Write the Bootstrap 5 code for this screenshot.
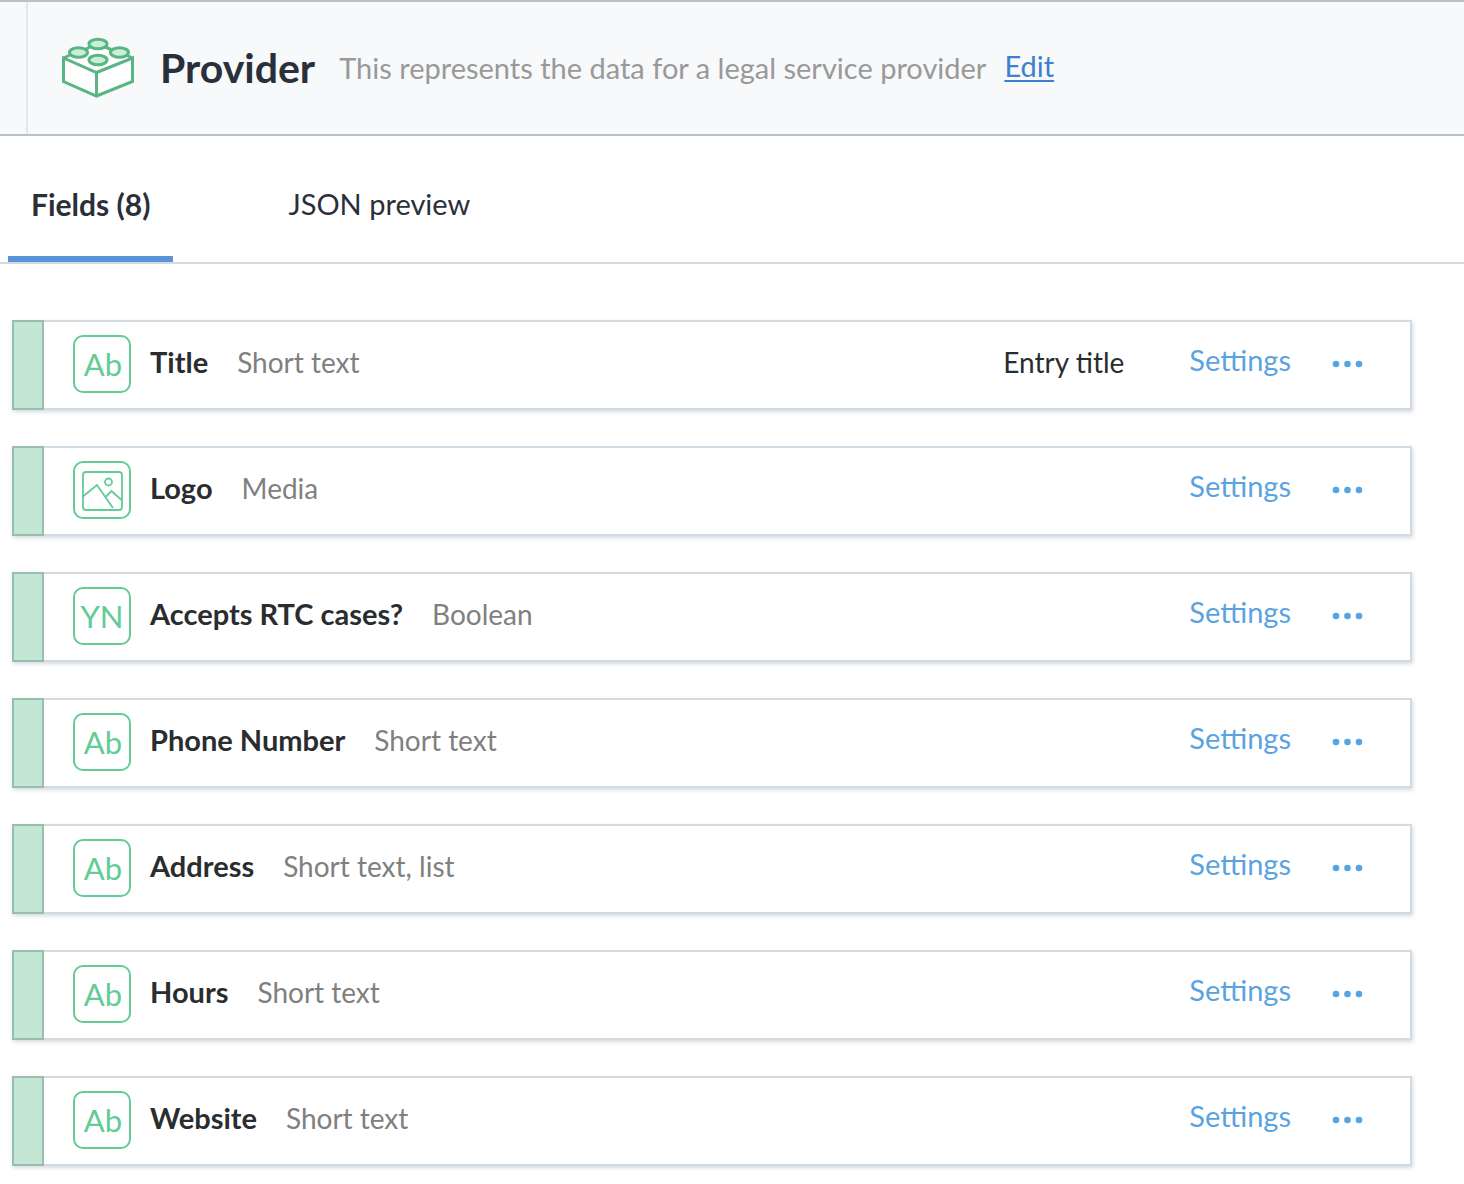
<!DOCTYPE html>
<html lang="en">
<head>
<meta charset="utf-8">
<meta name="viewport" content="width=device-width, initial-scale=1">
<title>Provider</title>
<link href="https://cdn.jsdelivr.net/npm/bootstrap@5.3.0/dist/css/bootstrap.min.css" rel="stylesheet">
<style>
  body { font-family: Lato, "Liberation Sans", sans-serif; font-size: 29px; line-height: 36px; color: #2a3039; }
  .type-header { height: 136px; background: #f7f9fb; border-top: 2px solid #b7c3c9; border-bottom: 2px solid #b7c3c9; }
  .back-strip { width: 28px; border-right: 2px solid #e3e7ea; }
  .brick { width: 74px; height: 62px; margin: 0 25px 2px 33px; }
  .type-name { font-size: 41px; line-height: 48px; font-weight: 700; margin-right: 24px; }
  .type-note { color: #999; margin-right: 18px; }
  .edit-link { color: #3c80cf; padding-bottom: 4px; text-underline-offset: 3px; }
  .type-tabs { height: 128px; border-bottom: 2px solid #d3dbe2; padding-left: 8px; gap: 92px; }
  .type-tabs .nav-link { color: #2a3039; border-radius: 0; padding: 16px 23px 0; border-bottom: 6px solid transparent; }
  .type-tabs .nav-link.active { font-size: 30px; font-weight: 700; border-bottom-color: #5b92dc; }
  .field-list { margin: 56px 52px 18px 12px; gap: 36px; }
  .field-row { height: 90px; border: 2px solid #d3dbe2; border-left: 0; background: #fff; box-shadow: 1px 2px 4px rgba(90, 110, 140, .25); }
  .drag-bar { width: 32px; margin: -2px 0; background: #c4e7d5; border: 2px solid #97bfac; }
  .field-icon { width: 58px; height: 58px; margin: 0 19px 2px 29px; }
  .field-icon text { font-size: 31px; fill: #63cb94; text-anchor: middle; }
  .field-name { font-weight: 700; color: #2a2d30; margin-right: 29px; }
  .field-kind { font-size: 28px; color: #808080; }
  .lift { padding-bottom: 6px; }
  .entry-tag { font-size: 28px; color: #2a2d30; margin-right: 65px; }
  .act { color: #5ba3e0; border: 0; background: none; padding: 0; }
  .set-act { padding-bottom: 10px; margin-right: 41px; }
  .dots-act { width: 32px; margin-right: 46px; padding-bottom: 2px; line-height: 0; }
</style>
<script src="https://cdn.jsdelivr.net/npm/bootstrap@5.3.0/dist/js/bootstrap.bundle.min.js"></script>
</head>
<body>
<svg class="d-none" aria-hidden="true">
  <symbol id="i-frame" viewBox="0 0 58 58"><rect x="1" y="1" width="56" height="56" rx="9" fill="none" stroke="#63cb94" stroke-width="2"/></symbol>
  <symbol id="i-dots" viewBox="0 0 32 8"><g fill="#55a5e5"><circle cx="4" cy="4" r="3.3"/><circle cx="15.500" cy="4" r="3.3"/><circle cx="27" cy="4" r="3.3"/></g></symbol>
</svg>

<header class="type-header d-flex">
  <div class="back-strip flex-shrink-0"></div>
  <div class="d-flex align-items-center text-nowrap">
    <svg class="brick" viewBox="0 0 74 62" fill="none" stroke="#59b583" stroke-width="3" aria-hidden="true">
      <path d="M2.500 22 35.500 8 71.500 22V46L35.500 60 2.500 46Z" fill="#fff" stroke="none"/>
      <path d="M2.500 22V45.500L35.500 60 71.500 45.500V22L35.500 36.500ZM35.500 36.500V60M2.500 22 9 19M25 13 30 10.500M43 10.500 50 13.500M65 19 71.500 22"/>
      <g fill="#c9efd8"><ellipse cx="37" cy="8" rx="9" ry="4.700"/><ellipse cx="17.500" cy="16.500" rx="9" ry="4.700"/><ellipse cx="58.500" cy="16.500" rx="9" ry="4.700"/><ellipse cx="37" cy="24" rx="9" ry="4.700"/></g>
    </svg>
    <h1 class="type-name mb-0">Provider</h1>
    <span class="type-note">This represents the data for a legal service provider</span>
    <a class="edit-link" href="#">Edit</a>
  </div>
</header>

<nav class="type-tabs nav flex-nowrap align-items-stretch">
  <a class="nav-link active d-flex align-items-center" aria-current="page" href="#">Fields (8)</a>
  <a class="nav-link d-flex align-items-center" href="#">JSON preview</a>
</nav>

<main class="field-list d-flex flex-column text-nowrap">
  <div class="field-row d-flex align-items-center">
    <div class="drag-bar align-self-stretch"></div>
    <svg class="field-icon" viewBox="0 0 58 58"><use href="#i-frame"/><text x="30" y="41">Ab</text></svg>
    <span class="field-name lift">Title</span><span class="field-kind lift">Short text</span>
    <span class="entry-tag lift ms-auto">Entry title</span>
    <button type="button" class="act set-act">Settings</button>
    <button type="button" class="act dots-act" aria-label="More"><svg width="32" height="8"><use href="#i-dots"/></svg></button>
  </div>
  <div class="field-row d-flex align-items-center">
    <div class="drag-bar align-self-stretch"></div>
    <svg class="field-icon" viewBox="0 0 58 58" fill="none" stroke="#63cb94" stroke-width="1.800"><use href="#i-frame"/><rect x="10" y="11" width="39" height="38" rx="3"/><circle cx="35.500" cy="21" r="3.500"/><path d="M10.500 35 24 24 40 47M32.500 36 38.500 30 48.500 39"/></svg>
    <span class="field-name lift">Logo</span><span class="field-kind lift">Media</span>
    <button type="button" class="act set-act ms-auto">Settings</button>
    <button type="button" class="act dots-act" aria-label="More"><svg width="32" height="8"><use href="#i-dots"/></svg></button>
  </div>
  <div class="field-row d-flex align-items-center">
    <div class="drag-bar align-self-stretch"></div>
    <svg class="field-icon" viewBox="0 0 58 58"><use href="#i-frame"/><text x="29" y="41">YN</text></svg>
    <span class="field-name lift">Accepts RTC cases?</span><span class="field-kind lift">Boolean</span>
    <button type="button" class="act set-act ms-auto">Settings</button>
    <button type="button" class="act dots-act" aria-label="More"><svg width="32" height="8"><use href="#i-dots"/></svg></button>
  </div>
  <div class="field-row d-flex align-items-center">
    <div class="drag-bar align-self-stretch"></div>
    <svg class="field-icon" viewBox="0 0 58 58"><use href="#i-frame"/><text x="30" y="41">Ab</text></svg>
    <span class="field-name lift">Phone Number</span><span class="field-kind lift">Short text</span>
    <button type="button" class="act set-act ms-auto">Settings</button>
    <button type="button" class="act dots-act" aria-label="More"><svg width="32" height="8"><use href="#i-dots"/></svg></button>
  </div>
  <div class="field-row d-flex align-items-center">
    <div class="drag-bar align-self-stretch"></div>
    <svg class="field-icon" viewBox="0 0 58 58"><use href="#i-frame"/><text x="30" y="41">Ab</text></svg>
    <span class="field-name lift">Address</span><span class="field-kind lift">Short text, list</span>
    <button type="button" class="act set-act ms-auto">Settings</button>
    <button type="button" class="act dots-act" aria-label="More"><svg width="32" height="8"><use href="#i-dots"/></svg></button>
  </div>
  <div class="field-row d-flex align-items-center">
    <div class="drag-bar align-self-stretch"></div>
    <svg class="field-icon" viewBox="0 0 58 58"><use href="#i-frame"/><text x="30" y="41">Ab</text></svg>
    <span class="field-name lift">Hours</span><span class="field-kind lift">Short text</span>
    <button type="button" class="act set-act ms-auto">Settings</button>
    <button type="button" class="act dots-act" aria-label="More"><svg width="32" height="8"><use href="#i-dots"/></svg></button>
  </div>
  <div class="field-row d-flex align-items-center">
    <div class="drag-bar align-self-stretch"></div>
    <svg class="field-icon" viewBox="0 0 58 58"><use href="#i-frame"/><text x="30" y="41">Ab</text></svg>
    <span class="field-name lift">Website</span><span class="field-kind lift">Short text</span>
    <button type="button" class="act set-act ms-auto">Settings</button>
    <button type="button" class="act dots-act" aria-label="More"><svg width="32" height="8"><use href="#i-dots"/></svg></button>
  </div>
</main>
</body>
</html>
